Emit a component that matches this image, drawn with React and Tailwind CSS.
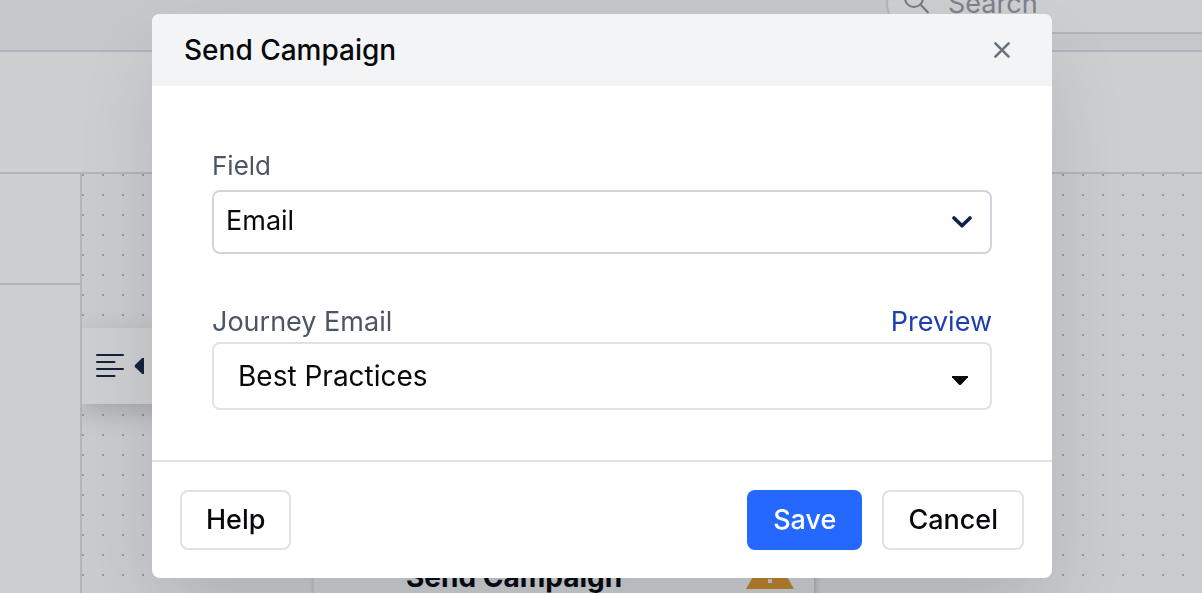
import React, { useState } from 'react';

const BUTTON = 'h-[60px] rounded-lg text-[27px] leading-10 font-medium';

const SearchIcon = () => (
  <svg className="w-7 h-7 shrink-0" viewBox="0 0 28 28" fill="none" stroke="#747986" strokeWidth="2">
    <circle cx="10" cy="8" r="9" />
    <path d="M16.5 14.5l8 8.5" />
  </svg>
);

const CloseIcon = () => (
  <svg className="w-4 h-4" viewBox="0 0 16 16" fill="none" stroke="#6b7280" strokeWidth="2.6" strokeLinecap="round">
    <path d="M1.4 1.4l13.2 13.2M14.6 1.4L1.4 14.6" />
  </svg>
);

const WarningIcon = () => (
  <svg className="w-12 h-11" viewBox="0 0 48 44">
    <path d="M24 2L48 44H0z" fill="#b9812a" />
    <path d="M22 16h4v14h-4zM22 34h4v4h-4z" fill="#c4c5c8" />
  </svg>
);

const PanelToggle = () => (
  <button
    type="button"
    aria-label="Toggle panel"
    className="absolute left-0 top-[154px] h-[76px] w-28 pl-3.5 flex items-center gap-2.5 bg-[#cdcecf] shadow-[0_8px_24px_rgba(0,0,0,0.18)]"
  >
    <svg className="w-7 h-6" viewBox="0 0 28 24" stroke="#15223f" strokeWidth="2" strokeLinecap="round">
      <path d="M1 1h26M1 8h17.5M1 15h26M1 22h17.5" />
    </svg>
    <svg className="w-2.5 h-4" viewBox="0 0 10 16" fill="#15223f">
      <path d="M8.2 0H10v16H8.2L1.2 9.2Q0 8 1.2 6.8z" />
    </svg>
  </button>
);

function JourneyBuilder() {
  return (
    <div className="h-screen flex flex-col overflow-hidden bg-[#cdced0]">
      <header className="h-[52px] shrink-0 flex justify-end items-start bg-[#c6c7cb] border-b-2 border-[#b2b3bb]">
        <label className="-mt-[26px] h-[60px] w-[316px] pl-4 flex items-center gap-4 rounded-l-full border-2 border-r-0 border-[#b2b3bb] bg-[#cdced0]">
          <SearchIcon />
          <input
            type="text"
            placeholder="Search"
            aria-label="Search"
            className="w-full min-w-0 bg-transparent text-[27px] leading-10 placeholder:text-[#7c808b] outline-none"
          />
        </label>
      </header>
      <div className="h-[122px] shrink-0 border-b-2 border-[#b2b3bb]" />
      <div className="flex-1 min-h-0 flex">
        <aside className="w-[82px] shrink-0 border-r-2 border-[#b2b3bb]">
          <div className="h-[111px] border-b-2 border-[#b2b3bb]" />
        </aside>
        <main className="relative flex-1 overflow-hidden bg-[#cacbcd] bg-[conic-gradient(from_270deg_at_2px_2px,#98999b_90deg,transparent_0)] bg-[size:20px_20px]">
          <PanelToggle />
          <div className="absolute left-[232px] top-[356px] w-[502px] h-[100px] pl-[92px] pr-5 flex justify-between bg-[#cdced0] border-r-2 border-[#b2b3bb] shadow-[0_2px_6px_rgba(0,0,0,0.15)]">
            <span className="pt-[27px] text-[28px] leading-10 font-bold text-[#08090c]">Send Campaign</span>
            <div className="pt-[15px]">
              <WarningIcon />
            </div>
          </div>
        </main>
      </div>
    </div>
  );
}

function SendCampaignModal() {
  const [field, setField] = useState('Email');
  const [email, setEmail] = useState('Best Practices');

  return (
    <div className="fixed inset-0 flex justify-center items-start pt-3.5 pl-0.5">
      <div
        role="dialog"
        aria-labelledby="modal-title"
        className="w-full max-w-[900px] rounded-lg overflow-hidden bg-white shadow-[0_40px_80px_-12px_rgba(10,20,40,0.15)]"
      >
        <div className="h-[72px] px-8 flex items-center justify-between bg-[#f3f4f6]">
          <h2 id="modal-title" className="text-[28px] leading-10 font-medium">Send Campaign</h2>
          <button type="button" aria-label="Close" className="p-2.5">
            <CloseIcon />
          </button>
        </div>

        <div className="px-[60px] pt-[60px] pb-[50px]">
          <label htmlFor="field" className="block mb-1 text-[26px] leading-10 text-[#4b5563]">Field</label>
          <div className="relative">
            <select
              id="field"
              value={field}
              onChange={e => setField(e.target.value)}
              className="block w-full h-16 pl-3 pr-14 pb-0.5 appearance-none rounded-lg border-2 border-[#d1d5db] bg-white text-[27px]"
            >
              <option>Email</option>
            </select>
            <svg className="absolute right-5 top-[26px] w-5 h-3 pointer-events-none" viewBox="0 0 20 12" fill="none" stroke="#0f2147" strokeWidth="3.6" strokeLinecap="round" strokeLinejoin="round">
              <path d="M2 2l8 7.8L18 2" />
            </svg>
          </div>

          <div className="mt-12 flex items-center justify-between text-[27px] leading-10">
            <label htmlFor="journey-email" className="text-[#4b5563]">Journey Email</label>
            <a href="#preview" className="text-[#1e40af]">Preview</a>
          </div>
          <div className="relative">
            <select
              id="journey-email"
              value={email}
              onChange={e => setEmail(e.target.value)}
              className="block w-full h-[68px] pl-6 pr-14 appearance-none rounded-lg border-2 border-[#e1e1e7] bg-white text-[28px]"
            >
              <option>Best Practices</option>
            </select>
            <svg className="absolute right-6 top-[34px] w-4 h-2.5 pointer-events-none" viewBox="0 0 16 10" fill="#08090c">
              <path d="M0 0h16v1.2L9.2 8.4Q8 9.6 6.8 8.4L0 1.2z" />
            </svg>
          </div>
        </div>

        <div className="p-7 flex items-center gap-5 border-t-2 border-[#e1e1e7]">
          <button type="button" className={`${BUTTON} mr-auto px-6 border-2 border-[#e1e1e7]`}>Help</button>
          <button type="button" className={`${BUTTON} px-[26px] bg-[#2468ff] text-white`}>Save</button>
          <button type="button" className={`${BUTTON} px-6 border-2 border-[#e1e1e7]`}>Cancel</button>
        </div>
      </div>
    </div>
  );
}

export default function App() {
  return (
    <div className="font-['Inter',sans-serif] text-[#08090c]">
      <JourneyBuilder />
      <SendCampaignModal />
    </div>
  );
}
